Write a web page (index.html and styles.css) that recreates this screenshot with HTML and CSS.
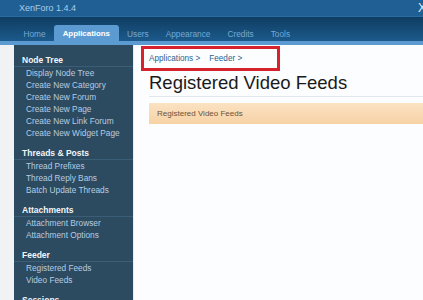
FILE: index.html
```html
<!DOCTYPE html>
<html lang="en">
<head>
<meta charset="UTF-8">
<title>XenForo Admin - Registered Video Feeds</title>
<link rel="stylesheet" href="styles.css">
</head>
<body>

<div class="header">
  <div class="topbar">
    <span class="logo">XenForo 1.4.4</span>
    <span class="close">X</span>
  </div>
  <div class="tabs">
    <a class="tab">Home</a>
    <a class="tab active">Applications</a>
    <a class="tab">Users</a>
    <a class="tab">Appearance</a>
    <a class="tab">Credits</a>
    <a class="tab">Tools</a>
  </div>
  <div class="tabstrip"></div>
</div>

<div class="page">
  <div class="sidebar">
    <div class="section">
      <h3>Node Tree</h3>
      <a>Display Node Tree</a>
      <a>Create New Category</a>
      <a>Create New Forum</a>
      <a>Create New Page</a>
      <a>Create New Link Forum</a>
      <a>Create New Widget Page</a>
    </div>
    <div class="section">
      <h3>Threads &amp; Posts</h3>
      <a>Thread Prefixes</a>
      <a>Thread Reply Bans</a>
      <a>Batch Update Threads</a>
    </div>
    <div class="section">
      <h3>Attachments</h3>
      <a>Attachment Browser</a>
      <a>Attachment Options</a>
    </div>
    <div class="section">
      <h3>Feeder</h3>
      <a>Registered Feeds</a>
      <a>Video Feeds</a>
    </div>
    <div class="section">
      <h3>Sessions</h3>
    </div>
  </div>

  <div class="content">
    <div class="breadcrumb">
      <a>Applications &gt;</a>
      <a>Feeder &gt;</a>
    </div>
    <h1>Registered Video Feeds</h1>
    <div class="sectionbar">Registered Video Feeds</div>
  </div>
</div>

</body>
</html>
```

FILE: styles.css
```css
body {
  margin: 0;
  padding: 0;
  font-family: "Liberation Sans", Arial, sans-serif;
  background-color: #f0f2f4;
  height: 300px;
  overflow: hidden;
}

.header {
  background-color: #1d5a8c;
}

.topbar {
  height: 16px;
  display: flex;
  justify-content: space-between;
  align-items: center;
  padding: 0 0 0 19px;
  background-color: #1f5f93;
  border-bottom: 1px solid #2a6ba0;
}

.logo {
  font-size: 9px;
  color: #a9cdea;
}

.close {
  font-size: 12px;
  color: #dfeefa;
  margin-right: -3px;
}

.tabs {
  height: 24px;
  display: flex;
  align-items: flex-end;
  padding-left: 15px;
  background: linear-gradient(#0f3d62, #1c5a8b);
}

.tab {
  font-size: 8.3px;
  color: #76a9d4;
  padding: 0 8.5px;
  height: 16px;
  line-height: 18px;
}

.tab.active {
  background-color: #5c9bd2;
  color: #fff;
  font-weight: bold;
  font-size: 7.9px;
  border-radius: 3px 3px 0 0;
}

.tabstrip {
  height: 4px;
  background-color: #5c9bd2;
}

.page {
  display: flex;
  height: 260px;
  padding-left: 14px;
}

.sidebar {
  width: 119px;
  flex-shrink: 0;
  background-color: #2c4a60;
  padding-top: 10px;
}

.section {
  margin-bottom: 9px;
}

.sidebar h3 {
  margin: 0;
  padding: 0 0 1px 8px;
  font-size: 8.5px;
  line-height: 10px;
  color: #f2f6fa;
  border-bottom: 1px solid #3a5d78;
}

.sidebar a {
  display: block;
  padding-left: 12px;
  font-size: 8.3px;
  line-height: 12px;
  color: #b7cde0;
}

.content {
  flex: 1;
  background-color: #fcfdfe;
  padding: 1px 0 0 15px;
  border-left: 1px solid #e6ecf2;
}

.breadcrumb {
  display: inline-flex;
  gap: 9px;
  margin-left: -8px;
  padding: 5px 35px 5px 5px;
  border: 3px solid #d6222c;
  font-size: 8.2px;
  line-height: 9px;
  color: #2d5f8d;
}

h1 {
  margin: 0 0 6px 0;
  padding: 1px 0 2px 0;
  font-size: 18.5px;
  line-height: 22px;
  font-weight: normal;
  color: #1a1a1a;
  border-bottom: 1px solid #e3e8ee;
}

.sectionbar {
  height: 21px;
  line-height: 21px;
  padding-left: 8px;
  font-size: 8px;
  color: #6e5236;
  background: linear-gradient(#fbe2c2, #f7d2a6);
}
```
